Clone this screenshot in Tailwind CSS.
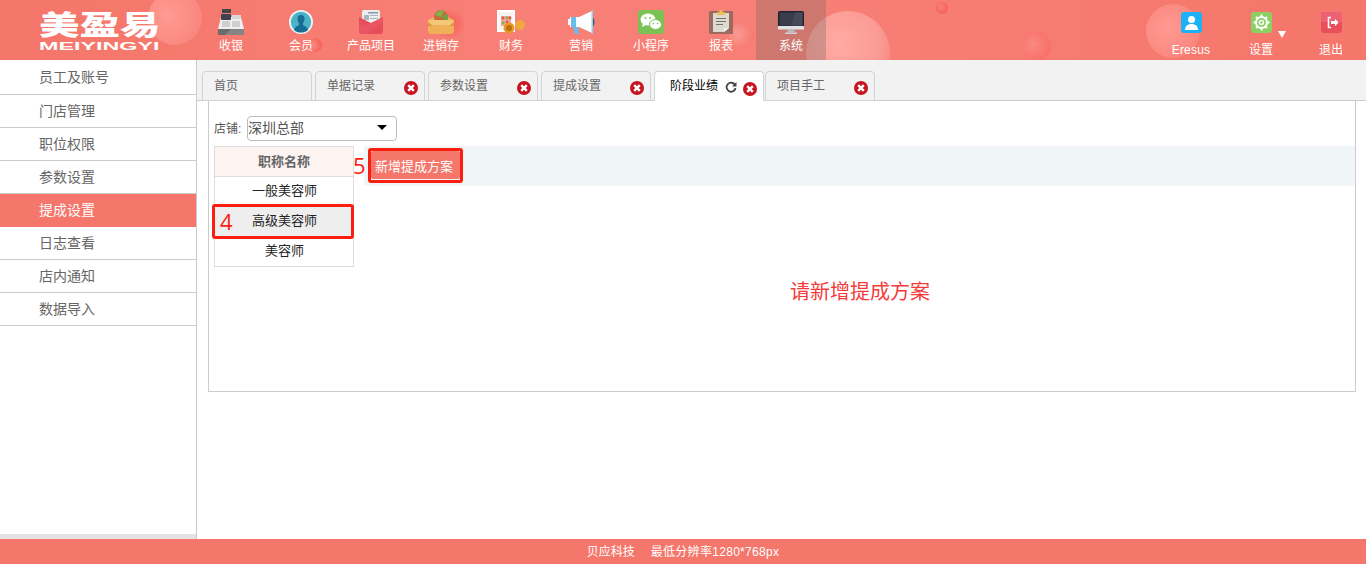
<!DOCTYPE html>
<html lang="zh">
<head>
<meta charset="utf-8">
<script src="https://cdn.jsdelivr.net/npm/@tailwindcss/browser@4"></script>
<title>美盈易</title>
</head>
<body class="bg-white overflow-hidden font-['Liberation_Sans','Noto_Sans_CJK_SC',sans-serif]">
<div class="flex flex-col w-[1366px] h-[570px]">

<!-- HEADER -->
<header class="relative flex h-[60px] shrink-0 overflow-hidden bg-[linear-gradient(90deg,#f5766a_0%,#f77f75_35%,#f77f75_60%,#f5766a_100%)] text-white text-xs">
  <!-- decorative bubbles -->
  <div class="absolute left-[148px] top-[-9px] w-[54px] h-[54px] rounded-full bg-[radial-gradient(circle_at_35%_45%,#ff9a92_0%,#fb8d85_55%,#f77f75_100%)]"></div>
  <div class="absolute left-[308px] top-[38px] w-[14px] h-[14px] rounded-full bg-[radial-gradient(circle_at_30%_50%,#f98c84,#f4544e)]"></div>
  <div class="absolute left-[436px] top-[10px] w-[28px] h-[28px] rounded-full bg-[radial-gradient(circle_at_50%_50%,#f6605a,#f77f75_90%)]"></div>
  <div class="absolute left-[729px] top-[23px] w-[25px] h-[25px] rounded-full bg-[radial-gradient(circle_at_35%_45%,#f99a92,#f76f68)]"></div>
  <div class="absolute left-[806px] top-[11px] w-[84px] h-[84px] rounded-full bg-[radial-gradient(circle_at_40%_40%,#ffaaa3_0%,#fb9c95_55%,#f5746b_100%)]"></div>
  <div class="absolute left-[936px] top-[2px] w-[12px] h-[12px] rounded-full bg-[radial-gradient(circle_at_40%_40%,#f9807a,#f2554e)]"></div>
  <div class="absolute left-[1021px] top-[31px] w-[30px] h-[30px] rounded-full bg-[radial-gradient(circle_at_40%_45%,#f98a82,#f8665e)]"></div>
  <div class="absolute left-[1146px] top-[4px] w-[54px] h-[54px] rounded-full bg-[radial-gradient(circle_at_40%_45%,#ff9a92,#fa8a82_60%,#f6786e)]"></div>

  <!-- logo -->
  <div class="relative w-[196px] shrink-0 pl-[39px] pt-[7px]">
    <div class="h-[33px] w-[122px] font-['Noto_Sans_CJK_SC'] font-black text-[27px] leading-[33px] origin-left scale-x-[1.5] whitespace-nowrap">美盈易</div>
    <div class="h-[10px] mt-[1px] font-bold text-[11px] leading-[10px] origin-left scale-x-[2.12] whitespace-nowrap">MEIYINGYI</div>
  </div>

  <!-- main nav -->
  <nav class="relative flex">
    <a class="flex flex-col items-center w-[70px] pt-[9px]">
      <svg class="w-[28px] h-[26px]" viewBox="0 0 28 26"><rect x="5" y="0" width="9" height="4" fill="#444"/><path d="M4 8h20l3 12H1z" fill="#efefef"/><rect x="4" y="5" width="10" height="6" rx="1" fill="#3d4250"/><rect x="15" y="6" width="9" height="4" fill="#d8d8d8"/><rect x="5" y="12" width="8" height="6" fill="#cfcfcf"/><rect x="15" y="12" width="8" height="6" fill="#cfcfcf"/><path d="M1 20h26v6H1z" fill="#6c6c6c"/><path d="M14 20h13v6H8z" fill="#858585"/></svg>
      <span class="mt-[3px] leading-[16px]">收银</span>
    </a>
    <a class="flex flex-col items-center w-[70px] pt-[10px]">
      <svg class="w-[24px] h-[24px]" viewBox="0 0 24 24"><circle cx="12" cy="12" r="12" fill="#e9f6f8"/><circle cx="12" cy="12" r="10.2" fill="#4cb2c6"/><path d="M5 20c1-4 4-4 5-5v-2c-1-1-1.500-3-1.500-4.500C8.500 6 10 5 12 5s3.500 1 3.500 3.500c0 1.500-.5 3.500-1.500 4.500v2c1 1 4 1 5 5-2 2-4.500 2.500-7 2.500s-5-.5-7-2.500z" fill="#176d94"/></svg>
      <span class="mt-[4px] leading-[16px]">会员</span>
    </a>
    <a class="flex flex-col items-center w-[70px] pt-[10px]">
      <svg class="w-[24px] h-[24px]" viewBox="0 0 24 24"><rect x="3" y="0" width="18" height="14" rx="2" fill="#eceff1"/><rect x="9" y="2" width="10" height="1.500" fill="#8a97a3"/><rect x="5" y="5" width="5" height="5" fill="#a9b4be"/><rect x="11" y="5" width="8" height="1" fill="#a9b4be"/><rect x="11" y="8" width="8" height="1" fill="#a9b4be"/><path d="M0 7l12 6 12-6v14a3 3 0 0 1-3 3H3a3 3 0 0 1-3-3z" fill="#e84d5b"/><path d="M24 7v5L7 24H3a3 3 0 0 1-3-3v-5l12-3z" fill="#ea5a66" opacity=".7"/></svg>
      <span class="mt-[4px] leading-[16px]">产品项目</span>
    </a>
    <a class="flex flex-col items-center w-[70px] pt-[10px]">
      <svg class="w-[30px] h-[24px]" viewBox="0 0 30 24"><path d="M2 10l6-3h14l6 3v11a3 3 0 0 1-3 3H5a3 3 0 0 1-3-3z" fill="#eeb157"/><circle cx="15" cy="7" r="7" fill="#c9683c"/><path d="M9 5a7 7 0 0 1 9-4l-3 6z" fill="#7cb44a"/><path d="M15 7l6-3a7 7 0 0 1 0 7z" fill="#6ea542"/><path d="M2 10h26l-4 5H6z" fill="#f4c877"/><path d="M2 13l5 3h16l5-3v3H2z" fill="#d9963f"/></svg>
      <span class="mt-[4px] leading-[16px]">进销存</span>
    </a>
    <a class="flex flex-col items-center w-[70px] pt-[10px]">
      <svg class="w-[28px] h-[24px]" viewBox="0 0 28 24"><rect x="1" y="1" width="16" height="20" fill="#f8f4f2" stroke="#fff" stroke-width="2"/><rect x="4" y="6" width="10" height="10" fill="#f2a79e"/><circle cx="6" cy="8" r="1.400" fill="#d8574e"/><circle cx="10" cy="8" r="1.400" fill="#7eb542"/><circle cx="13" cy="8" r="1.400" fill="#d8574e"/><circle cx="6" cy="13" r="1.400" fill="#7eb542"/><circle cx="10" cy="12" r="1.400" fill="#d8574e"/><ellipse cx="23" cy="15" rx="5" ry="5" fill="#f0a93c"/><circle cx="12" cy="18" r="5.500" fill="#e99a24"/><circle cx="12" cy="18" r="3" fill="#b97212"/></svg>
      <span class="mt-[4px] leading-[16px]">财务</span>
    </a>
    <a class="flex flex-col items-center w-[70px] pt-[10px]">
      <svg class="w-[28px] h-[24px]" viewBox="0 0 28 24"><path d="M25 1v22L12 17H3V7h9z" fill="#fbfdff"/><rect x="24.500" y="0" width="1.500" height="24" fill="#8ed0ee"/><path d="M26 8c2 1 2 7 0 8z" fill="#4c5a68"/><path d="M4 7h5v10H4zM6 17h5l1 7H8z" fill="#69bde8"/><rect x="1" y="9" width="3" height="6" fill="#fff"/></svg>
      <span class="mt-[4px] leading-[16px]">营销</span>
    </a>
    <a class="flex flex-col items-center w-[70px] pt-[10px]">
      <svg class="w-[26px] h-[24px]" viewBox="0 0 26 24"><rect width="26" height="24" rx="3" fill="#7bc255"/><ellipse cx="10" cy="9.500" rx="7.500" ry="6" fill="#fff"/><path d="M5 13l-1 4 4-2z" fill="#fff"/><ellipse cx="17.500" cy="14.500" rx="6" ry="5" fill="#fff" stroke="#7bc255"/><circle cx="7.500" cy="8" r="1" fill="#7bc255"/><circle cx="12" cy="8" r="1" fill="#7bc255"/><circle cx="15.500" cy="13.500" r=".8" fill="#7bc255"/><circle cx="19.500" cy="13.500" r=".8" fill="#7bc255"/></svg>
      <span class="mt-[4px] leading-[16px]">小程序</span>
    </a>
    <a class="flex flex-col items-center w-[70px] pt-[9px]">
      <svg class="w-[24px] h-[25px]" viewBox="0 0 24 25"><rect y="2" width="24" height="23" rx="1" fill="#9b6a5e"/><path d="M4 4h16v15l-5 4H4z" fill="#dcdad0"/><path d="M15 23l5-4h-5z" fill="#f4f3ee"/><path d="M8 3h8v3H8zM10.500 1h3v2h-3z" fill="#eebb58"/><path d="M7 9h10v1H7zM7 12h10v1H7zM7 15h7v1H7z" fill="#77736b"/></svg>
      <span class="mt-[4px] leading-[16px]">报表</span>
    </a>
    <a class="flex flex-col items-center w-[70px] pt-[11px] bg-[#6c6664]/30">
      <svg class="w-[26px] h-[23px]" viewBox="0 0 26 23"><rect width="26" height="18" rx="2" fill="#20222e"/><rect x="1.500" y="1.500" width="23" height="13" fill="#3a3d4c"/><path d="M18 1.500h6.500v13H13z" fill="#474a5a"/><rect y="15" width="26" height="3.500" fill="#dfe2e4"/><path d="M10 18.500h6l1 3H9z" fill="#b8bcbe"/><rect x="7" y="21.500" width="12" height="1.500" fill="#cfd2d4"/></svg>
      <span class="mt-[4px] leading-[16px]">系统</span>
    </a>
  </nav>

  <div class="flex-1"></div>

  <!-- right nav -->
  <div class="relative flex">
    <a class="flex flex-col items-center w-[70px] pt-[12px]">
      <svg class="w-[21px] h-[21px]" viewBox="0 0 21 21"><rect width="21" height="21" rx="3" fill="#1cb0f6"/><circle cx="10.500" cy="7.500" r="3.500" fill="#fff"/><path d="M4 18c0-4 3-6 6.500-6s6.500 2 6.500 6z" fill="#fff"/></svg>
      <span class="mt-[9px] leading-[16px] tracking-[.2px]">Eresus</span>
    </a>
    <a class="relative flex flex-col items-center w-[70px] pt-[12px]">
      <svg class="w-[21px] h-[21px]" viewBox="0 0 21 21"><rect width="21" height="21" rx="3" fill="#8cd063"/><circle cx="10.500" cy="10.500" r="5.500" fill="none" stroke="#fff" stroke-width="2"/><circle cx="10.500" cy="10.500" r="2" fill="none" stroke="#fff" stroke-width="1.300"/><path d="M10.500 2.500v3M10.500 15.500v3M2.500 10.500h3M15.500 10.500h3M5 5l2 2M14 14l2 2M16 5l-2 2M7 14l-2 2" stroke="#fff" stroke-width="1.800"/></svg>
      <span class="mt-[9px] leading-[16px]">设置</span>
      <span class="absolute left-[52px] top-[31px] w-0 h-0 border-x-[4px] border-x-transparent border-t-[7px] border-t-white"></span>
    </a>
    <a class="flex flex-col items-center w-[70px] pt-[12px]">
      <svg class="w-[21px] h-[21px]" viewBox="0 0 21 21"><rect width="21" height="21" rx="3" fill="#e94f5b"/><path d="M0 3a3 3 0 0 1 3-3h15a3 3 0 0 1 3 3v7H0z" fill="#ec6174"/><path d="M10 5.500H7.500v10H10" fill="none" stroke="#fff" stroke-width="1.600"/><path d="M10 9h4V6.800l3.500 3.700-3.500 3.700V12h-4z" fill="#fff"/></svg>
      <span class="mt-[9px] leading-[16px]">退出</span>
    </a>
  </div>
</header>

<!-- BODY -->
<div class="flex flex-1 min-h-0">
  <!-- sidebar -->
  <aside class="flex flex-col w-[197px] shrink-0 border-r border-[#ccc] text-sm text-[#666]">
    <ul class="flex-1">
      <li class="h-[35px] pl-[39px] leading-[35px] border-b border-[#ccc]">员工及账号</li>
      <li class="h-[33px] pl-[39px] leading-[32px] border-b border-[#ccc]">门店管理</li>
      <li class="h-[33px] pl-[39px] leading-[32px] border-b border-[#ccc]">职位权限</li>
      <li class="h-[33px] pl-[39px] leading-[32px] border-b border-[#ccc]">参数设置</li>
      <li class="h-[33px] pl-[39px] leading-[32px] bg-[#f5766a] text-white">提成设置</li>
      <li class="h-[33px] pl-[39px] leading-[32px] border-b border-[#ccc]">日志查看</li>
      <li class="h-[33px] pl-[39px] leading-[32px] border-b border-[#ccc]">店内通知</li>
      <li class="h-[33px] pl-[39px] leading-[32px] border-b border-[#ccc]">数据导入</li>
    </ul>
    <div class="h-[5px] bg-[#e3e3e3]"></div>
  </aside>

  <!-- main -->
  <main class="flex-1 min-w-0 flex flex-col">
    <div class="flex h-[41px] shrink-0 items-end gap-[3px] pl-[5px] bg-[#f2f2f2] border-b border-[#ccc] text-xs text-[#666]">
      <div class="w-[110px] h-[30px] -mb-px pl-[11px] leading-[28px] border border-[#d3d3d3] rounded-t-[4px] bg-[#f2f2f2]">首页</div>
      <div class="relative w-[110px] h-[30px] -mb-px pl-[11px] leading-[28px] border border-[#d3d3d3] rounded-t-[4px] bg-[#f2f2f2]">单据记录
        <svg class="absolute left-[88px] top-[9px] w-[14px] h-[14px]" viewBox="0 0 14 14"><circle cx="7" cy="7" r="7" fill="#c8141e"/><path d="M4.200 4.200l5.600 5.600M9.800 4.200l-5.600 5.600" stroke="#fff" stroke-width="2.400"/></svg></div>
      <div class="relative w-[110px] h-[30px] -mb-px pl-[11px] leading-[28px] border border-[#d3d3d3] rounded-t-[4px] bg-[#f2f2f2]">参数设置
        <svg class="absolute left-[88px] top-[9px] w-[14px] h-[14px]" viewBox="0 0 14 14"><circle cx="7" cy="7" r="7" fill="#c8141e"/><path d="M4.200 4.200l5.600 5.600M9.800 4.200l-5.600 5.600" stroke="#fff" stroke-width="2.400"/></svg></div>
      <div class="relative w-[110px] h-[30px] -mb-px pl-[11px] leading-[28px] border border-[#d3d3d3] rounded-t-[4px] bg-[#f2f2f2]">提成设置
        <svg class="absolute left-[88px] top-[9px] w-[14px] h-[14px]" viewBox="0 0 14 14"><circle cx="7" cy="7" r="7" fill="#c8141e"/><path d="M4.200 4.200l5.600 5.600M9.800 4.200l-5.600 5.600" stroke="#fff" stroke-width="2.400"/></svg></div>
      <div class="relative w-[110px] h-[30px] -mb-px pl-[15px] leading-[28px] border border-[#d3d3d3] border-b-white rounded-t-[4px] bg-white text-black">阶段业绩
        <svg class="absolute left-[70px] top-[9px] w-[12px] h-[12px]" viewBox="0 0 12 12"><path d="M10 4a4.500 4.500 0 1 0 .5 3" fill="none" stroke="#444" stroke-width="1.800"/><path d="M11.500 1v4.500H7z" fill="#444"/></svg>
        <svg class="absolute left-[88px] top-[10px] w-[14px] h-[14px]" viewBox="0 0 14 14"><circle cx="7" cy="7" r="7" fill="#c8141e"/><path d="M4.200 4.200l5.600 5.600M9.800 4.200l-5.600 5.600" stroke="#fff" stroke-width="2.400"/></svg></div>
      <div class="relative -ml-[2px] w-[110px] h-[30px] -mb-px pl-[11px] leading-[28px] border border-[#d3d3d3] rounded-t-[4px] bg-[#f2f2f2]">项目手工
        <svg class="absolute left-[88px] top-[9px] w-[14px] h-[14px]" viewBox="0 0 14 14"><circle cx="7" cy="7" r="7" fill="#c8141e"/><path d="M4.200 4.200l5.600 5.600M9.800 4.200l-5.600 5.600" stroke="#fff" stroke-width="2.400"/></svg></div>
    </div>

    <div class="flex-1 pl-[11px] pr-[10px]">
      <section class="relative h-[291px] border border-t-0 border-[#ccc] pl-[5px] pt-[15px]">
        <div class="flex items-center h-[25px] text-xs text-[#555]">
          <span class="w-[33px]">店铺:</span>
          <div class="relative w-[150px] h-[25px] border border-[#bbb] rounded-[4px] text-sm leading-[23px] text-[#555]">深圳总部
            <span class="absolute left-[129px] top-[8px] w-0 h-0 border-x-[5px] border-x-transparent border-t-[5px] border-t-black"></span>
          </div>
        </div>

        <div class="flex gap-[10px] mt-[5px]">
          <div class="w-[140px] h-[121px] shrink-0 border border-[#ddd] text-[13px] text-center text-[#222]">
            <div class="h-[30px] leading-[30px] bg-[#fdf3f0] font-bold text-[#666] border-b border-[#ddd]">职称名称</div>
            <div class="h-[30px] pl-px leading-[28px]">一般美容师</div>
            <div class="h-[30px] pl-px leading-[28px] bg-[#eeeeee]">高级美容师</div>
            <div class="h-[29px] pl-px leading-[28px]">美容师</div>
          </div>
          <div class="flex-1 h-[40px] bg-[#f0f5f7] rounded-l-[3px] pl-[7px] pt-[5px]">
            <div class="w-[89px] h-[28px] pl-[4px] bg-[#f5766a] rounded-[2px] text-white text-[13px] leading-[32px] whitespace-nowrap">新增提成方案</div>
          </div>
        </div>

        <p class="absolute left-[581px] top-[177px] text-[20px] leading-[28px] text-[#f33b3b] whitespace-nowrap">请新增提成方案</p>

        <!-- annotations -->
        <div class="absolute left-[3px] top-[103px] w-[142px] h-[35px] border-[3px] border-[#f91e10] rounded-[3px] pl-[5px] text-[22px] leading-[29px] text-[#f91e10] font-['Open_Sans']">4</div>
        <div class="absolute left-[159px] top-[47px] w-[95px] h-[35px] border-[3px] border-[#f91e10] rounded-[3px]"></div>
        <span class="absolute left-[144px] top-[49px] text-[22px] leading-[30px] text-[#f91e10] font-['Open_Sans']">5</span>
      </section>
    </div>
  </main>
</div>

<!-- FOOTER -->
<footer class="flex shrink-0 h-[25px] items-center justify-center gap-[16px] bg-[#f5766a] text-xs text-white">
  <span>贝应科技</span><span class="tracking-[.3px]">最低分辨率1280*768px</span>
</footer>
<div class="h-[6px] shrink-0 bg-white"></div>

</div>
</body>
</html>
